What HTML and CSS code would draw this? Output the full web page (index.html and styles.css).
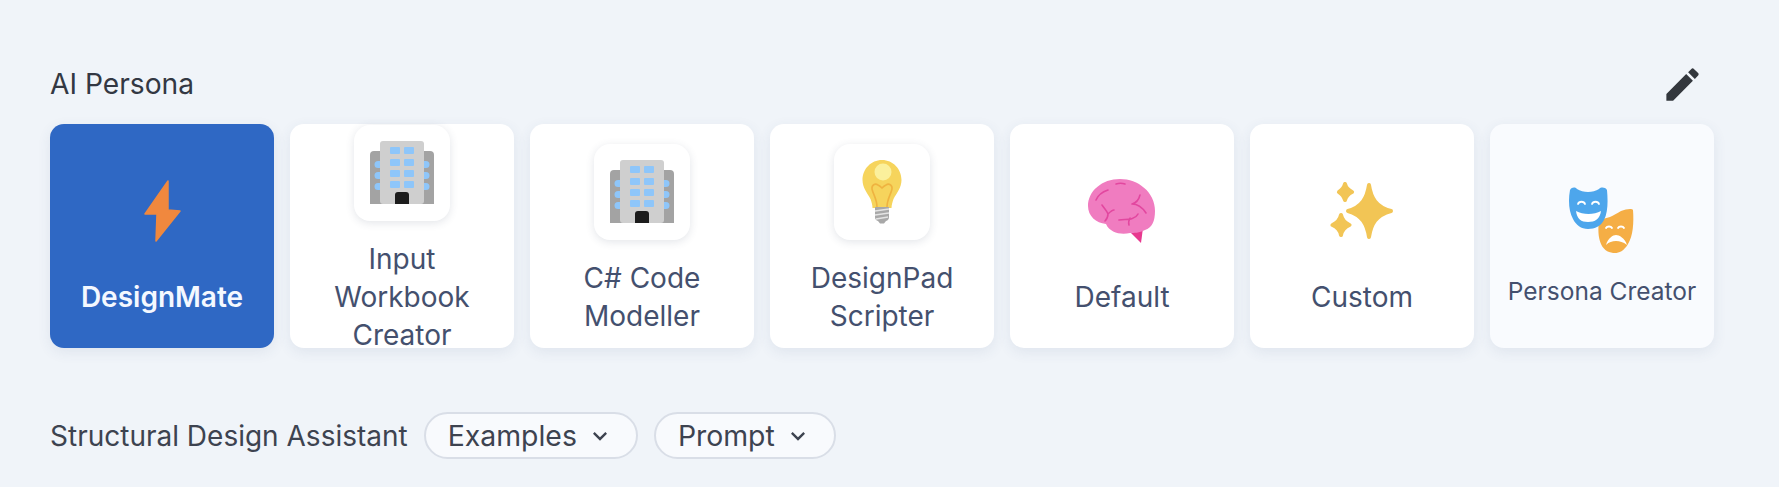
FILE: index.html
```html
<!DOCTYPE html>
<html lang="en">
<head>
<meta charset="utf-8">
<title>AI Persona</title>
<link rel="stylesheet" href="styles.css">
</head>
<body>
<main class="page">
  <header class="head">
    <h2 class="title">AI Persona</h2>
    <button class="edit" aria-label="Edit">
      <svg viewBox="0 0 24 24" class="edit-icon"><path d="M3 17.25V21h3.75L17.81 9.94l-3.75-3.75L3 17.25zM20.71 7.04c.39-.39.39-1.02 0-1.41l-2.34-2.34c-.39-.39-1.02-.39-1.41 0l-1.83 1.83 3.75 3.75 1.83-1.83z"/></svg>
    </button>
  </header>

  <section class="cards">
    <article class="card card-active">
      <div class="tile-plain">
        <svg class="i-bolt" viewBox="0 0 37 62"><path d="M24 1 1 34h12l-1 27 24-30-12-1z" fill="#f0883e" stroke="#f0883e" stroke-width="1.5" stroke-linejoin="round"/></svg>
      </div>
      <div class="label">DesignMate</div>
    </article>

    <article class="card">
      <div class="tile">
        <svg class="i-building" viewBox="0 0 64 63">
          <path d="M0 63V14q0-4 4-4h56q4 0 4 4v49z" fill="#a3a3a3"/>
          <rect x="10" width="44" height="63" rx="3" fill="#cfcfcf"/>
          <g fill="#8ec6fa"><rect x="20" y="6" width="10" height="7" rx="1"/><rect x="34" y="6" width="10" height="7" rx="1"/><rect x="20" y="18" width="10" height="7" rx="1"/><rect x="34" y="18" width="10" height="7" rx="1"/><rect x="20" y="29" width="10" height="7" rx="1"/><rect x="34" y="29" width="10" height="7" rx="1"/><rect x="20" y="40" width="10" height="7" rx="1"/><rect x="34" y="40" width="10" height="7" rx="1"/><path d="M10 20H8a3 3 0 0 0 0 7h2zM10 31H8a3 3 0 0 0 0 7h2zM10 42H8a3 3 0 0 0 0 7h2zM54 20h2a3 3 0 0 1 0 7h-2zM54 31h2a3 3 0 0 1 0 7h-2zM54 42h2a3 3 0 0 1 0 7h-2z"/></g>
          <path d="M25 63V54q0-3 3-3h8q3 0 3 3v9z" fill="#1c1c1c"/>
        </svg>
      </div>
      <div class="label">Input Workbook Creator</div>
    </article>

    <article class="card">
      <div class="tile">
        <svg class="i-building" viewBox="0 0 64 63">
          <path d="M0 63V14q0-4 4-4h56q4 0 4 4v49z" fill="#a3a3a3"/>
          <rect x="10" width="44" height="63" rx="3" fill="#cfcfcf"/>
          <g fill="#8ec6fa"><rect x="20" y="6" width="10" height="7" rx="1"/><rect x="34" y="6" width="10" height="7" rx="1"/><rect x="20" y="18" width="10" height="7" rx="1"/><rect x="34" y="18" width="10" height="7" rx="1"/><rect x="20" y="29" width="10" height="7" rx="1"/><rect x="34" y="29" width="10" height="7" rx="1"/><rect x="20" y="40" width="10" height="7" rx="1"/><rect x="34" y="40" width="10" height="7" rx="1"/><path d="M10 20H8a3 3 0 0 0 0 7h2zM10 31H8a3 3 0 0 0 0 7h2zM10 42H8a3 3 0 0 0 0 7h2zM54 20h2a3 3 0 0 1 0 7h-2zM54 31h2a3 3 0 0 1 0 7h-2zM54 42h2a3 3 0 0 1 0 7h-2z"/></g>
          <path d="M25 63V54q0-3 3-3h8q3 0 3 3v9z" fill="#1c1c1c"/>
        </svg>
      </div>
      <div class="label">C# Code Modeller</div>
    </article>

    <article class="card">
      <div class="tile">
        <svg class="i-bulb" viewBox="0 0 64 64">
          <path d="M32 0c11 0 19.500 9 19.500 20 0 8-5 13-8 19-1 3-2 6-2 9H22.500c0-3-1-6-2-9-3-6-8-11-8-19C12.500 9 21 0 32 0z" fill="#f6d45c"/>
          <path d="M27 47c0-8-4-13-5-18-.5-4 3-6 6-4 2 1 4 3 4 3s2-2 4-3c3-2 6.500 0 6 4-1 5-5 10-5 18" fill="none" stroke="#efb340" stroke-width="1.600"/>
          <circle cx="33" cy="12" r="8.500" fill="#fbf09c"/>
          <path d="M25 47h14v10q0 3-3 4l-2 2.500h-4L28 61q-3-1-3-4z" fill="#a8a8a8"/>
          <path d="M25 51l14-2M25 55l14-2M26 59l12-2" stroke="#e4e4e4" stroke-width="1.300"/>
        </svg>
      </div>
      <div class="label">DesignPad Scripter</div>
    </article>

    <article class="card">
      <div class="tile-plain">
        <svg class="i-brain" viewBox="0 0 68 64">
          <path d="M41 52l12 12 2-15z" fill="#e8388f"/>
          <path d="M32 0c18 0 35 13 35 32 0 10-3 17-10 19-6 3-11 3-15 3-9 2-20 0-24-9C8 44 0 37 0 27 0 12 14 0 32 0z" fill="#f07cc0"/>
          <path d="M8 21c2-5 6-8 12-10M28 5c3-1 6-1 9 0M14 26c2 3 5 6 6 9 0 3-1 5-3 7M20 35c2-2 4-4 6-4M44 25c4-1 7-5 8-9M44 25c5 0 10 3 14 9M31 41c4-1 8 0 12-1 3-1 5-1 7-5M42 39c-1 2-2 4-1 7" fill="none" stroke="#e2479f" stroke-width="1.600" stroke-linecap="round"/>
        </svg>
      </div>
      <div class="label">Default</div>
    </article>

    <article class="card">
      <div class="tile-plain">
        <svg class="i-sparkles" viewBox="0 0 64 58">
          <g fill="#f2c555" stroke="#f2c555" stroke-width="4" stroke-linejoin="round">
            <path d="M39 3c2 13 7 22 22 26-15 4-20 13-22 26-2-13-7-22-21-26 14-4 19-13 21-26z"/>
            <path d="M15 2c1 4 3 6 7 8-4 2-6 4-7 8-1-4-3-6-6-8 3-2 5-4 6-8z"/>
            <path d="M11 33c1 5 4 8 8.500 10-4.500 2-7.500 5-8.500 10-1-5-4-8-8.500-10 4.500-2 7.500-5 8.500-10z"/>
          </g>
        </svg>
      </div>
      <div class="label">Custom</div>
    </article>

    <article class="card card-soft">
      <svg class="i-masks" viewBox="0 0 66 66">
        <path d="M30 32c8 0 14-3 22-8 5-2 11-3 12-1 1 13 0 26-5 34-4 7-9 9-13 9-5 0-11-2-14-9-3-7-3-15-2-25z" fill="#f5ae45"/>
        <path d="M1 3c2-3 5-3 7-1 3 2 7 3 11 3s8-1 11-3c2-2 6-2 8 1 1 11 1 22-3 30-3 6-9 9-16 9-7 0-12-4-15-10C0 25-1 14 1 3z" fill="#4da6ec"/>
        <path d="M9 17c1-3 6-3 7 0M23 17c1-3 6-3 7 0" fill="none" stroke="#fff" stroke-width="1.800" stroke-linecap="round"/>
        <path d="M7 24c7 4 18 4 25 0-1 8-6 11-13 11S8 32 7 24z" fill="#fff"/>
        <path d="M37 41c1-2 5-2 6 0M49 41c1-2 5-2 6 0" fill="none" stroke="#fff" stroke-width="1.800" stroke-linecap="round"/>
        <path d="M37 58c2-7 7-10 10-10s9 3 11 10c-4-3-7-4-11-4s-7 1-10 4z" fill="#fff"/>
      </svg>
      <div class="label label-small">Persona Creator</div>
    </article>
  </section>

  <section class="tools">
    <span class="tools-label">Structural Design Assistant</span>
    <button class="pill">Examples
      <svg class="chev" viewBox="0 0 24 24"><path d="M16.590 8.590 12 13.170 7.410 8.590 6 10l6 6 6-6z"/></svg>
    </button>
    <button class="pill">Prompt
      <svg class="chev" viewBox="0 0 24 24"><path d="M16.590 8.590 12 13.170 7.410 8.590 6 10l6 6 6-6z"/></svg>
    </button>
  </section>
</main>
</body>
</html>
```

FILE: styles.css
```css
* { box-sizing: border-box; }
html, body { margin: 0; height: 100%; }
body {
  background: #f0f4f9;
  font-family: Inter, "Liberation Sans", sans-serif;
  overflow: hidden;
}
.page { width: 1664px; margin-left: 50px; padding-top: 60px; }

.head { display: flex; align-items: center; justify-content: space-between; height: 48px; margin-bottom: 16px; }
.title { margin: 0; font-size: 28.2px; font-weight: 400; color: #333843; }
.edit { width: 48px; height: 48px; padding: 0; margin-right: 8px; border: 0; background: none; display: flex; align-items: center; justify-content: center; }
.edit-icon { width: 43px; height: 43px; fill: #33373d; }

.cards { display: flex; gap: 16px; }
.card {
  flex: 0 0 224px;
  height: 224px;
  padding: 6px 8px 0;
  background: #fff;
  border-radius: 14px;
  box-shadow: 0 4px 14px rgba(60, 80, 120, .09);
  display: flex;
  flex-direction: column;
  align-items: center;
  justify-content: center;
  gap: 19px;
}
.card-active { background: #2f68c4; }
.card-active .label { color: #f4f8ff; font-weight: 600; }
.card-soft { background: #f9fbfe; padding-top: 23px; gap: 21px; }

.tile, .tile-plain { flex: 0 0 96px; width: 96px; height: 96px; display: flex; align-items: center; justify-content: center; }
.tile { background: #fff; border-radius: 16px; box-shadow: 0 2px 8px rgba(60, 70, 100, .14); }

.label { font-size: 28px; line-height: 38px; text-align: center; color: #44506e; }
.label-small { font-size: 24.5px; line-height: 34px; white-space: nowrap; }

.i-bolt { width: 37px; height: 62px; }
.i-building { width: 64px; height: 63px; }
.i-bulb { width: 64px; height: 64px; }
.i-brain { width: 68px; height: 64px; }
.i-sparkles { width: 64px; height: 58px; }
.i-masks { flex: 0 0 66px; width: 66px; height: 66px; }

.tools { display: flex; align-items: center; gap: 16px; margin-top: 64px; }
.tools-label { font-size: 28px; color: #3d4350; }
.pill {
  height: 47px;
  padding: 0 22px 0 22px;
  display: flex;
  align-items: center;
  gap: 9px;
  background: #f8fafd;
  border: 2px solid #d9dee7;
  border-radius: 24px;
  font: 400 28.4px Inter, "Liberation Sans", sans-serif;
  color: #3d4350;
}
.chev { width: 28px; height: 28px; fill: #3d4350; }
```
